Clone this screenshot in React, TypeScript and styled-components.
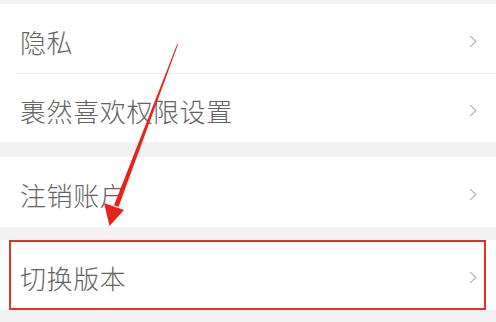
import React from "react"
import styled, { createGlobalStyle, css } from "styled-components"

const GlobalStyle = createGlobalStyle`
  html, body {
    margin: 0;
    padding: 0;
    background: #f2f2f2;
  }
  body {
    font-family: "Noto Sans CJK SC", "Noto Sans", sans-serif;
  }
`

const Page = styled.div`
  position: relative;
  width: 496px;
  height: 322px;
  overflow: hidden;
  background: #f2f2f2;
  padding-top: 4px;
  box-sizing: border-box;
`

const Group = styled.div<{ $gap: number }>`
  margin-top: ${(p) => p.$gap}px;
  background: #fff;
  display: flex;
  flex-direction: column;
  &:first-child {
    margin-top: 0;
  }
`

const Row = styled.div<{ $h: number; $highlight?: boolean }>`
  position: relative;
  height: ${(p) => p.$h}px;
  display: flex;
  align-items: center;
  justify-content: space-between;
  padding: 5px 19px 0 20px;
  box-sizing: border-box;
  ${(p) =>
    p.$highlight &&
    css`
      &::after {
        content: "";
        position: absolute;
        left: 9px;
        right: 10px;
        top: 0;
        bottom: 0;
        border: 2px solid #e5312a;
      }
    `}
`

const Divider = styled.div`
  height: 1px;
  margin-left: 16px;
  background: #ececec;
`

const Label = styled.span`
  font-size: 26px;
  font-weight: 300;
  color: #636363;
  letter-spacing: 0.6px;
`

const Chevron = () => (
  <svg width="8" height="13" viewBox="0 0 8 13">
    <path d="M1 1 L7 6.5 L1 12" fill="none" stroke="#b4b4b4" strokeWidth="1.1" />
  </svg>
)

const ArrowLayer = styled.svg`
  position: absolute;
  left: 0;
  top: 0;
  pointer-events: none;
`

const Arrow = () => (
  <ArrowLayer width="496" height="322" viewBox="0 0 496 322">
    <polygon points="177.2,44 178,44.6 118.5,207 114,205.2" fill="#e8231c" />
    <polygon points="104,203 124,210 109.5,226" fill="#e8231c" />
  </ArrowLayer>
)

export default function App() {
  return (
    <>
      <GlobalStyle />
      <Page>
        <Group $gap={0}>
          <Row $h={69}>
            <Label>隐私</Label>
            <Chevron />
          </Row>
          <Divider />
          <Row $h={68}>
            <Label>裹然喜欢权限设置</Label>
            <Chevron />
          </Row>
        </Group>
        <Group $gap={15}>
          <Row $h={70}>
            <Label>注销账户</Label>
            <Chevron />
          </Row>
        </Group>
        <Group $gap={13}>
          <Row $h={70} $highlight>
            <Label>切换版本</Label>
            <Chevron />
          </Row>
        </Group>
        <Arrow />
      </Page>
    </>
  )
}
